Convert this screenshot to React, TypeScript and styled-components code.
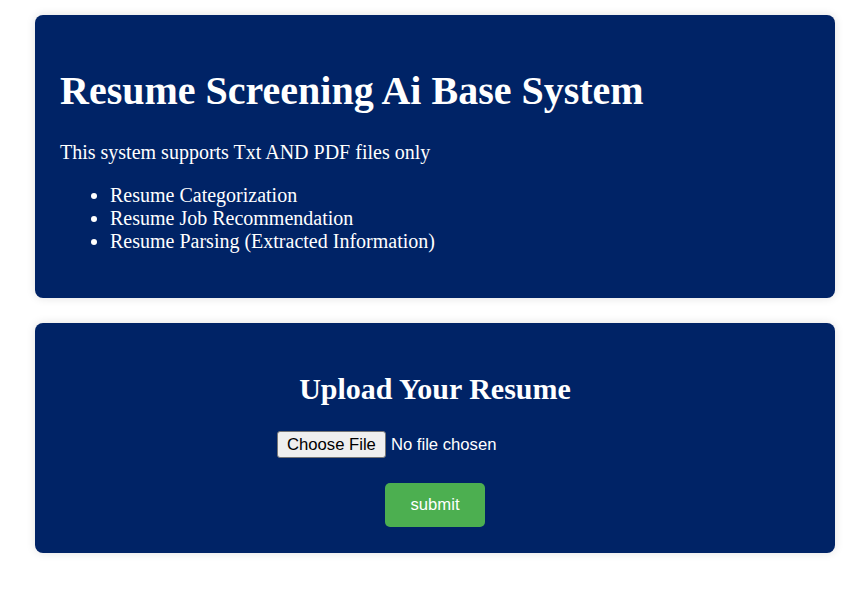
import styled, { createGlobalStyle } from "styled-components";

const GlobalStyle = createGlobalStyle`
  html, body {
    margin: 0;
    padding: 0;
    background: #ffffff;
  }
  body {
    font-family: "Liberation Serif", "Times New Roman", serif;
    font-size: 20px;
    color: #ffffff;
  }
`;

const Page = styled.div`
  padding: 15px 0 40px 35px;
`;

const Column = styled.div`
  width: 800px;
  display: flex;
  flex-direction: column;
  gap: 25px;
`;

const Card = styled.section<{ $center?: boolean }>`
  background: #002366;
  border-radius: 8px;
  padding: 25px 25px ${(p) => (p.$center ? "26px" : "25px")};
  box-shadow: 0 0 10px rgba(0, 0, 0, 0.12);
  text-align: ${(p) => (p.$center ? "center" : "left")};
`;

const Title = styled.h1`
  font-size: 40px;
  font-weight: bold;
  margin: 27px 0;
  line-height: normal;
`;

const Text = styled.p`
  margin: 20px 0;
`;

const List = styled.ul`
  margin: 20px 0;
  padding-left: 50px;
  list-style: disc;
`;

const SubTitle = styled.h2`
  font-size: 30px;
  font-weight: bold;
  margin: 24px 0 25px;
`;

const Form = styled.form`
  display: flex;
  flex-direction: column;
  align-items: center;
  gap: 25px;
`;

const FileInput = styled.input`
  width: 316px;
  font-family: "Liberation Sans", Arial, sans-serif;
  font-size: 16.67px;
  color: #ffffff;
  margin: 0;

  &::file-selector-button {
    font-family: "Liberation Sans", Arial, sans-serif;
    font-size: 16.67px;
    color: #000000;
    background: #efefef;
    border: 1px solid #767676;
    border-radius: 3px;
    padding: 1px 9px;
    margin-right: 5px;
    height: 27px;
  }
`;

const SubmitButton = styled.button`
  width: 100px;
  height: 44px;
  background: #4caf50;
  color: #ffffff;
  border: none;
  border-radius: 5px;
  font-family: "Liberation Sans", Arial, sans-serif;
  font-size: 16.67px;
  cursor: pointer;
`;

export default function App() {
  return (
    <Page>
      <GlobalStyle />
      <Column>
        <Card>
          <Title>Resume Screening Ai Base System</Title>
          <Text>This system supports Txt AND PDF files only</Text>
          <List>
            <li>Resume Categorization</li>
            <li>Resume Job Recommendation</li>
            <li>Resume Parsing (Extracted Information)</li>
          </List>
        </Card>

        <Card $center>
          <SubTitle>Upload Your Resume</SubTitle>
          <Form onSubmit={(e) => e.preventDefault()}>
            <FileInput type="file" name="resume" />
            <SubmitButton type="submit">submit</SubmitButton>
          </Form>
        </Card>
      </Column>
    </Page>
  );
}
